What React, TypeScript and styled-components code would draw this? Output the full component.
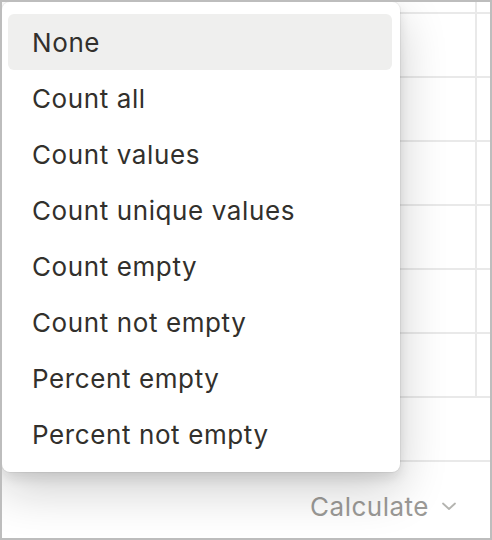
import styled, { createGlobalStyle } from "styled-components";

const GlobalStyle = createGlobalStyle`
  html, body {
    margin: 0;
    padding: 0;
    background: #ffffff;
  }
  body {
    font-family: Inter, "Liberation Sans", sans-serif;
    color: #37352f;
  }
`;

const Frame = styled.div`
  position: relative;
  box-sizing: border-box;
  width: 492px;
  height: 540px;
  border: 2px solid #bdbdbd;
  background: #ffffff;
  display: flex;
  flex-direction: column;
  overflow: hidden;
`;

const Table = styled.div`
  display: flex;
  flex-direction: column;
  padding-top: 10px;
  border-bottom: 2px solid #e9e9e9;
`;

const Row = styled.div<{ split?: boolean }>`
  display: grid;
  grid-template-columns: ${(p) => (p.split ? "473px 1fr" : "1fr")};
  height: 62px;
  border-top: 2px solid #e9e9e9;
`;

const Cell = styled.div`
  & + & {
    border-left: 2px solid #e9e9e9;
  }
`;

const TopStub = styled.div`
  position: absolute;
  top: 0;
  left: 473px;
  width: 2px;
  height: 10px;
  background: #e9e9e9;
`;

const Footer = styled.div`
  flex: 1;
  display: flex;
  align-items: center;
  justify-content: flex-end;
  gap: 12px;
  padding-right: 33px;
  padding-top: 12px;
  color: #9b9a97;
  font-size: 26px;
  letter-spacing: 0.5px;
`;

const Menu = styled.div`
  position: absolute;
  top: 0;
  left: 0;
  width: 398px;
  box-sizing: border-box;
  padding: 12px 8px 10px 6px;
  background: #ffffff;
  border-radius: 8px;
  box-shadow: rgba(15, 15, 15, 0.05) 0 0 0 1px,
    rgba(15, 15, 15, 0.1) 0 6px 12px, rgba(15, 15, 15, 0.2) 0 18px 48px;
`;

const Item = styled.div<{ active?: boolean }>`
  height: 56px;
  display: flex;
  align-items: center;
  padding-left: 24px;
  border-radius: 6px;
  font-size: 26px;
  letter-spacing: 0.6px;
  color: #32302c;
  background: ${(p) => (p.active ? "#efefee" : "transparent")};
`;

const options = [
  "None",
  "Count all",
  "Count values",
  "Count unique values",
  "Count empty",
  "Count not empty",
  "Percent empty",
  "Percent not empty",
];

function Chevron() {
  return (
    <svg width="16" height="10" viewBox="0 0 16 10" fill="none">
      <path
        d="M2 2.5 L8 8 L14 2.5"
        stroke="#b4b4b0"
        strokeWidth="1.8"
        strokeLinecap="round"
        strokeLinejoin="round"
      />
    </svg>
  );
}

export default function App() {
  return (
    <>
      <GlobalStyle />
      <Frame>
        <TopStub />
        <Table>
          {[0, 1, 2, 3, 4, 5].map((i) => (
            <Row split key={i}>
              <Cell />
              <Cell />
            </Row>
          ))}
          <Row>
            <Cell />
          </Row>
        </Table>
        <Footer>
          <span>Calculate</span>
          <Chevron />
        </Footer>
        <Menu>
          {options.map((o, i) => (
            <Item key={o} active={i === 0}>
              {o}
            </Item>
          ))}
        </Menu>
      </Frame>
    </>
  );
}
